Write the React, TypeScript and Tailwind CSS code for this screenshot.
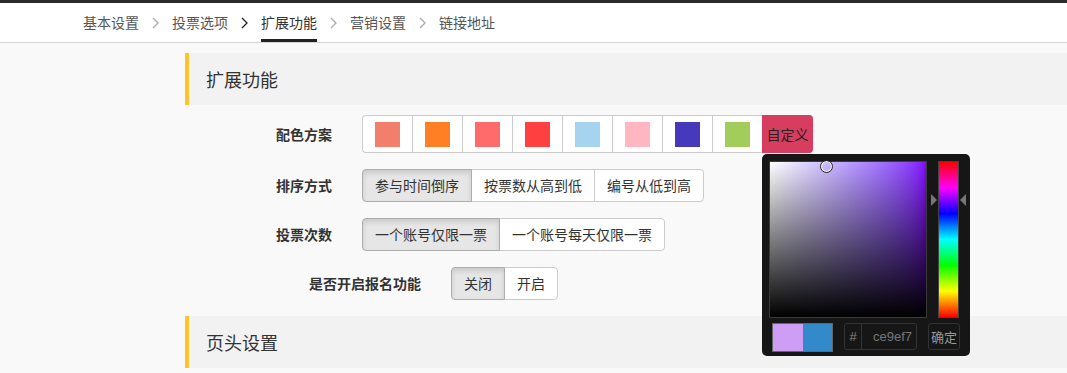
import React from "react";

const tabs = ["基本设置", "投票选项", "扩展功能", "营销设置", "链接地址"];
const swatches = ["#f27f6c", "#ff7f24", "#ff6a6a", "#ff4040", "#a6d4ee", "#ffb6c1", "#4739bb", "#a2cd5a"];

function Chevron({ dark }: { dark?: boolean }) {
  return (
    <svg width="7" height="12" viewBox="0 0 7 12" className="shrink-0">
      <polyline points="1,1 6,6 1,11" fill="none" stroke={dark ? "#222" : "#aaa"} strokeWidth="1.3" />
    </svg>
  );
}

function SectionHeader({ title }: { title: string }) {
  return (
    <div className="h-[52px] bg-[#f2f2f2] border-l-4 border-[#ffc429] pl-[17px] flex items-center text-[18px] text-[#333]">
      {title}
    </div>
  );
}

function BtnGroup({ items, active }: { items: string[]; active: number }) {
  return (
    <div className="flex">
      {items.map((t, i) => (
        <button
          key={t}
          className={
            "relative h-[33px] px-[12px] border text-[14px] text-[#333] " +
            (i > 0 ? "-ml-px " : "") +
            (i === 0 ? "rounded-l-[4px] " : "") +
            (i === items.length - 1 ? "rounded-r-[4px] " : "") +
            (i === active
              ? "z-10 bg-[#e6e6e6] border-[#adadad] shadow-[inset_0_3px_5px_rgba(0,0,0,0.125)]"
              : "bg-white border-[#ccc]")
          }
        >
          {t}
        </button>
      ))}
    </div>
  );
}

function ColorPicker() {
  return (
    <div className="absolute left-0 top-full mt-px z-20 w-[208px] h-[202px] bg-[#161616] rounded-[5px] p-[7px]">
      <div className="flex">
        <div className="relative w-[158px] h-[157px] border border-[#3a3a3a] bg-linear-to-r from-white to-[#8400ff]">
          <div className="absolute inset-0 bg-linear-to-t from-black to-transparent" />
          <div className="absolute left-[50px] top-[-2px] w-[13px] h-[13px] rounded-full border border-[#222] shadow-[inset_0_0_0_1px_#fff]" />
        </div>
        <div className="relative ml-[11px] w-[21px] h-[157px] border border-[#444] bg-[linear-gradient(to_bottom,#f00,#f0f,#00f,#0ff,#0f0,#ff0,#f00)]">
          <div className="absolute left-[-8px] top-[32px] w-0 h-0 border-y-[6px] border-y-transparent border-l-[6px] border-l-[#777]" />
          <div className="absolute right-[-8px] top-[32px] w-0 h-0 border-y-[6px] border-y-transparent border-r-[6px] border-r-[#777]" />
        </div>
      </div>
      <div className="flex mt-[5px]">
        <div className="ml-[3px] flex w-[61px] h-[29px] border border-[#666]">
          <div className="flex-1 bg-[#ce9ef7]" />
          <div className="flex-1 bg-[#338acb]" />
        </div>
        <div className="ml-[11px] flex w-[73px] h-[27px] border border-[#333] rounded-[3px]">
          <div className="w-[17px] border-r border-[#333] flex items-center justify-center text-[13px] text-[#888] font-['Liberation_Sans',sans-serif]">
            #
          </div>
          <div className="flex-1 flex items-center justify-end pr-[4px] text-[13px] text-[#777] font-['Liberation_Sans',sans-serif]">
            ce9ef7
          </div>
        </div>
        <div className="ml-[11px] w-[32px] h-[27px] border border-[#333] rounded-[3px] flex items-center justify-center text-[13px] text-[#999]">
          确定
        </div>
      </div>
    </div>
  );
}

export default function App() {
  return (
    <div className="min-h-screen bg-[#f9f9f9] font-['Noto_Sans_CJK_SC',sans-serif] overflow-hidden">
      <div className="h-[3px] bg-[#2b2b2b]" />
      <nav className="h-[40px] bg-white border-b border-[#d5d5d5] flex items-center pl-[83px] gap-[13px] text-[14px]">
        {tabs.map((t, i) => (
          <React.Fragment key={t}>
            {i > 0 && <Chevron dark={i === 2} />}
            <span className={"relative " + (i === 2 ? "text-[#333]" : "text-[#555]")}>
              {t}
              {i === 2 && <span className="absolute left-0 right-0 top-[27px] h-[3px] bg-[#222]" />}
            </span>
          </React.Fragment>
        ))}
      </nav>
      <main className="pl-[185px] pt-[10px]">
        <SectionHeader title="扩展功能" />
        <div className="flex items-center mt-[10px] pl-[91px]">
          <span className="mr-[30px] text-[14px] font-bold text-[#333]">配色方案</span>
          <div className="flex">
            {swatches.map((c, i) => (
              <div
                key={c}
                className={
                  "w-[50px] h-[38px] bg-white border-y border-l border-[#ccc] flex items-center justify-center " +
                  (i === 0 ? "rounded-l-[4px]" : "")
                }
              >
                <div className="w-[25px] h-[25px]" style={{ backgroundColor: c }} />
              </div>
            ))}
            <div className="relative">
              <div className="w-[51px] h-[38px] bg-[#d63d5e] rounded-r-[4px] flex items-center justify-center text-[14px] text-[#222]">
                自定义
              </div>
              <ColorPicker />
            </div>
          </div>
        </div>
        <div className="flex items-center mt-[16px] pl-[91px]">
          <span className="mr-[30px] text-[14px] font-bold text-[#333]">排序方式</span>
          <BtnGroup items={["参与时间倒序", "按票数从高到低", "编号从低到高"]} active={0} />
        </div>
        <div className="flex items-center mt-[16px] pl-[91px]">
          <span className="mr-[30px] text-[14px] font-bold text-[#333]">投票次数</span>
          <BtnGroup items={["一个账号仅限一票", "一个账号每天仅限一票"]} active={0} />
        </div>
        <div className="flex items-center mt-[16px] pl-[124px]">
          <span className="mr-[30px] text-[14px] font-bold text-[#333]">是否开启报名功能</span>
          <BtnGroup items={["关闭", "开启"]} active={0} />
        </div>
        <div className="mt-[16px]">
          <SectionHeader title="页头设置" />
        </div>
      </main>
    </div>
  );
}
